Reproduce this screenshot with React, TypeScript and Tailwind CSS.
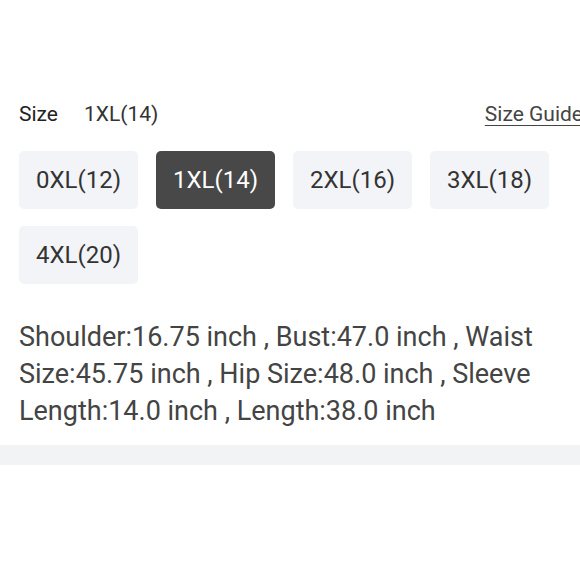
import { useState } from 'react';

const sizes = ['0XL(12)', '1XL(14)', '2XL(16)', '3XL(18)', '4XL(20)'];

export default function App() {
  const [selected, setSelected] = useState('1XL(14)');

  return (
    <div className="w-[580px] h-[580px] overflow-hidden bg-white text-[#333] font-['Roboto',sans-serif]">
      <div className="w-[620px] pl-[19px] pt-[100px]">
        <div className="flex items-center justify-between pr-[37px] text-[21px] leading-[28px]">
          <div className="flex gap-[26px]">
            <span className="text-[#222]">Size</span>
            <span>{selected}</span>
          </div>
          <span className="underline underline-offset-4 decoration-1 text-[#444]">Size Guide</span>
        </div>
        <div className="mt-[23px] flex flex-wrap gap-x-[18px] gap-y-[17px] w-[540px]">
          {sizes.map((s) => (
            <button
              key={s}
              type="button"
              onClick={() => setSelected(s)}
              className={`w-[119px] h-[58px] rounded-[5px] text-[24px] ${
                s === selected ? 'bg-[#484848] text-white' : 'bg-[#f3f4f7] text-[#333]'
              }`}
            >
              {s}
            </button>
          ))}
        </div>
        <p className="mt-[35px] w-[545px] text-[27px] leading-[37px] text-[#444]">
          Shoulder:16.75 inch , Bust:47.0 inch , Waist Size:45.75 inch , Hip Size:48.0 inch , Sleeve Length:14.0 inch , Length:38.0 inch
        </p>
      </div>
      <div className="mt-[15px] h-[20px] bg-[#f2f3f5]" />
    </div>
  );
}
